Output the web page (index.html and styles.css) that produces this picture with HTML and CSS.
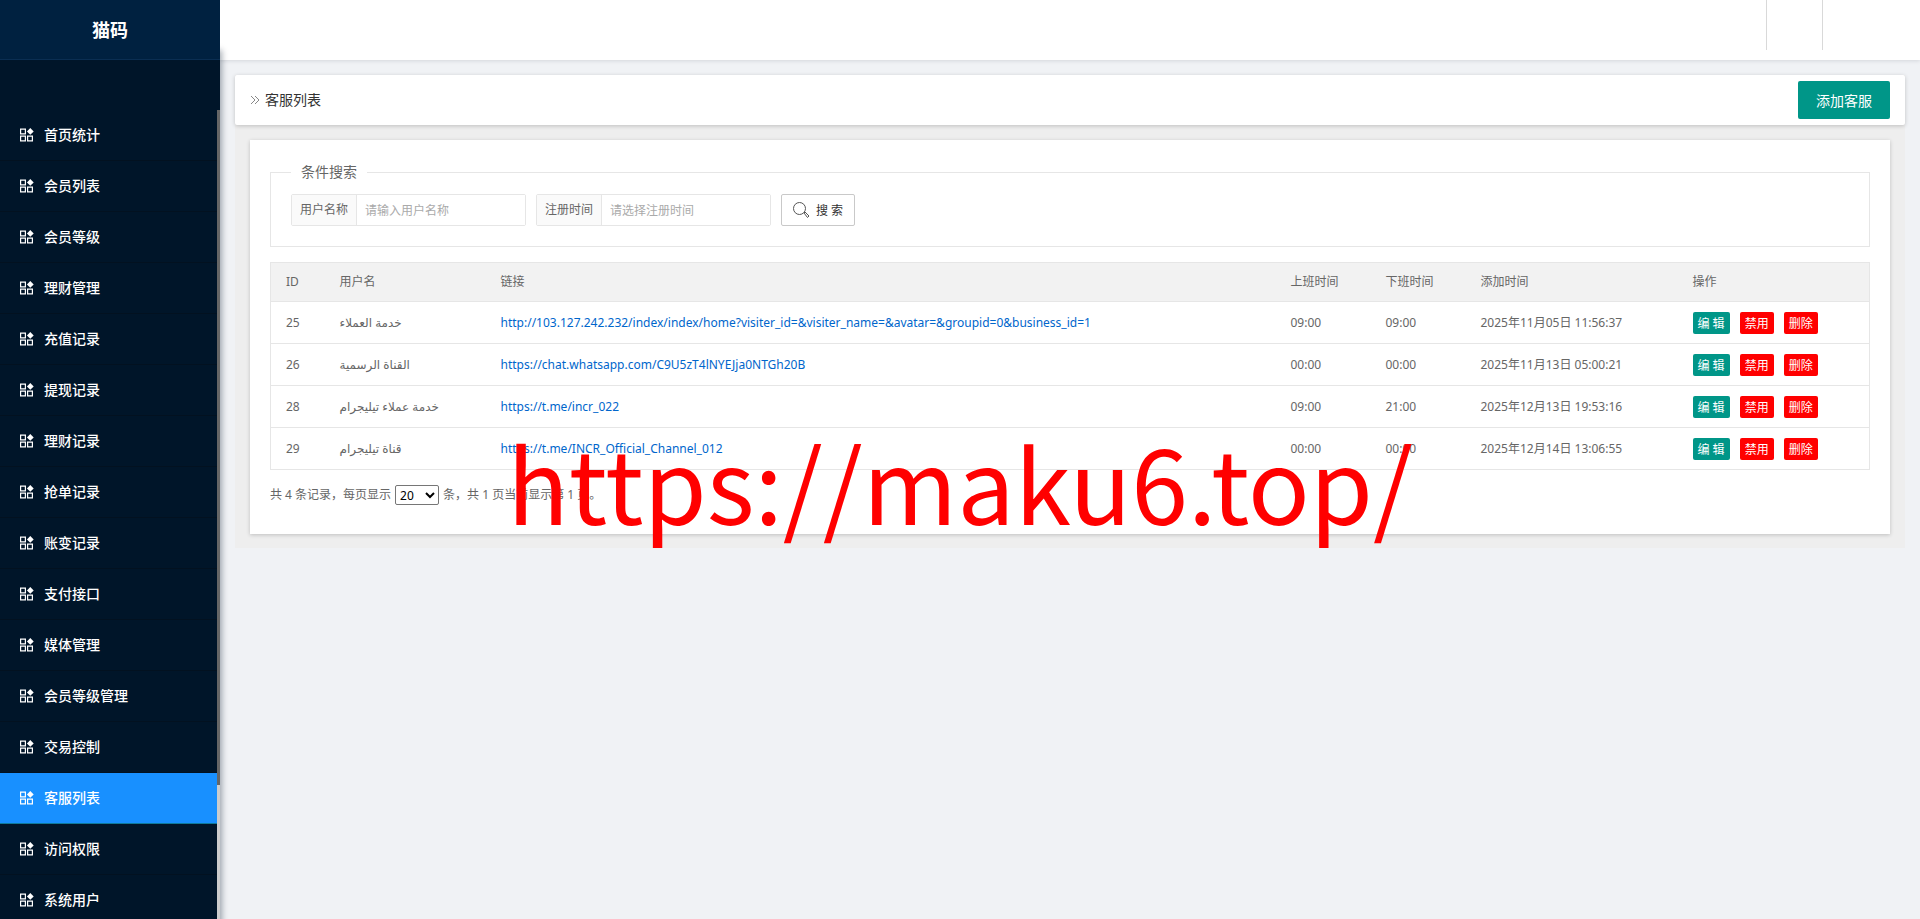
FILE: index.html
```
<!DOCTYPE html>
<html lang="zh-CN">
<head>
    <meta charset="UTF-8">
    <meta name="viewport" content="width=device-width, initial-scale=1.0">
    <title>客服列表</title>
    <link rel="stylesheet" href="styles.css">
</head>
<body>

    <svg class="defs" width="0" height="0">
        <symbol id="icon-app" viewBox="0 0 14 14">
            <path d="M.6 1.100h4.800v4.800H.6zM.6 8.100h4.800v4.800H.6zM7.600 8.100h4.800v4.800H7.600z" fill="none" stroke="currentColor" stroke-width="1.200"/>
            <path d="M10.300 0L13.700 3.400L10.300 6.800L6.900 3.400z" fill="currentColor"/>
        </symbol>
    </svg>

    <aside class="side">
        <div class="logo">猫码</div>
        <nav class="menu" id="menu"></nav>
    </aside>

    <div class="main">
        <header class="topbar">
            <div class="top-item"></div>
            <div class="top-item last"></div>
        </header>

        <div class="page">
            <div class="title-bar">
                <svg class="arrow" viewBox="0 0 10 10"><path d="M1 1l4 4l-4 4M5 1l4 4l-4 4" fill="none" stroke="#888"/></svg>
                <h1>客服列表</h1>
                <button type="button" class="btn btn-add">添加客服</button>
            </div>

            <div class="card">
                <form>
                    <fieldset>
                        <legend>条件搜索</legend>
                        <div class="search-row">
                            <div class="field">
                                <label for="username">用户名称</label>
                                <input type="text" id="username" placeholder="请输入用户名称">
                            </div>
                            <div class="field">
                                <label for="regtime">注册时间</label>
                                <input type="text" id="regtime" placeholder="请选择注册时间">
                            </div>
                            <button type="button" class="btn btn-search">
                                <svg viewBox="0 0 16 16"><circle cx="6.500" cy="6.500" r="6" fill="none" stroke="#555"/><path d="M11 11l1-1l4 4l-1.500 1.500z" fill="none" stroke="#555"/></svg>
                                搜 索
                            </button>
                        </div>
                    </fieldset>
                </form>

                <table>
                    <colgroup>
                        <col class="col-id">
                        <col class="col-name">
                        <col>
                        <col class="col-time">
                        <col class="col-time">
                        <col class="col-date">
                        <col class="col-op">
                    </colgroup>
                    <thead>
                        <tr>
                            <th>ID</th>
                            <th>用户名</th>
                            <th>链接</th>
                            <th>上班时间</th>
                            <th>下班时间</th>
                            <th>添加时间</th>
                            <th>操作</th>
                        </tr>
                    </thead>
                    <tbody id="rows"></tbody>
                </table>

                <div class="pager">
                    <label for="limit">共 4 条记录，每页显示</label>
                    <select id="limit">
                        <option>10</option>
                        <option selected>20</option>
                        <option>50</option>
                    </select>
                    <span>条，共 1 页当前显示第 1 页。</span>
                </div>
            </div>
        </div>
    </div>

    <div class="watermark">https://maku6.top/</div>

    <script>
        const menus = ['首页统计', '会员列表', '会员等级', '理财管理', '充值记录', '提现记录', '理财记录', '抢单记录',
            '账变记录', '支付接口', '媒体管理', '会员等级管理', '交易控制', '客服列表', '访问权限', '系统用户'];

        const rows = [
            [25, 'خدمة العملاء', 'http://103.127.242.232/index/index/home?visiter_id=&visiter_name=&avatar=&groupid=0&business_id=1', '09:00', '09:00', '2025年11月05日 11:56:37'],
            [26, 'القناة الرسمية', 'https://chat.whatsapp.com/C9U5zT4lNYEJja0NTGh20B', '00:00', '00:00', '2025年11月13日 05:00:21'],
            [28, 'خدمة عملاء تيليجرام', 'https://t.me/incr_022', '09:00', '21:00', '2025年12月13日 19:53:16'],
            [29, 'قناة تيليجرام', 'https://t.me/INCR_Official_Channel_012', '00:00', '00:00', '2025年12月14日 13:06:55']
        ];

        document.getElementById('menu').innerHTML = menus.map(name =>
            `<a href="#" class="${name === '客服列表' ? 'active' : ''}"><svg><use href="#icon-app"/></svg>${name}</a>`
        ).join('');

        document.getElementById('rows').innerHTML = rows.map(r => {
            const url = r[2].replace(/&/g, '&amp;');
            return `<tr>
                <td>${r[0]}</td>
                <td>${r[1]}</td>
                <td><a href="${url}">${url}</a></td>
                <td>${r[3]}</td>
                <td>${r[4]}</td>
                <td>${r[5]}</td>
                <td><div class="ops">
                    <button type="button" class="btn btn-xs">编 辑</button>
                    <button type="button" class="btn btn-xs btn-red">禁用</button>
                    <button type="button" class="btn btn-xs btn-red">删除</button>
                </div></td>
            </tr>`;
        }).join('');
    </script>
</body>
</html>
```
FILE: styles.css
```
* {
    box-sizing: border-box;
}

body {
    margin: 0;
    display: flex;
    height: 100vh;
    overflow: hidden;
    background: #f0f2f5;
    color: #666;
    font: 12px/20px "Noto Sans", "Noto Sans CJK SC", "DejaVu Sans", sans-serif;
}

button, input, select {
    font-family: inherit;
    font-size: 12px;
}

.defs {
    position: absolute;
}

/* sidebar */
.side {
    position: relative;
    z-index: 2;
    flex: none;
    width: 220px;
    display: flex;
    flex-direction: column;
    background: #001529;
    box-shadow: 2px 50px 6px rgba(0, 21, 41, 0.35);
}

.logo {
    flex: none;
    height: 60px;
    line-height: 60px;
    text-align: center;
    font-size: 18px;
    font-weight: bold;
    color: #fff;
    background: #002140;
    border-bottom: 1px solid #0a2e52;
}

.menu {
    position: relative;
    flex: 1;
    min-height: 0;
    margin-top: 50px;
    overflow: hidden;
}

/* thin scrollbar on the right edge of the menu */
.menu::after {
    content: "";
    position: absolute;
    top: 0;
    right: 0;
    bottom: 0;
    width: 3px;
    background: linear-gradient(#666 83.4%, #ccc 83.4%);
}

.menu a {
    display: flex;
    align-items: center;
    gap: 10px;
    height: 51px;
    padding-left: 20px;
    border-bottom: 1px solid #021120;
    color: #fff;
    font-size: 14px;
    font-weight: 500;
    text-decoration: none;
}

.menu a.active {
    background: #1890ff;
    border-bottom-color: #0f7a9a;
}

.menu svg {
    width: 14px;
    height: 14px;
}

/* right side */
.main {
    flex: 1;
    min-width: 0;
}

.topbar {
    display: flex;
    justify-content: flex-end;
    height: 60px;
    background: #fff;
    box-shadow: 0 1px 4px rgba(0, 21, 41, 0.12);
}

.top-item {
    width: 56px;
    height: 50px;
    border-left: 1px solid #d9d9d9;
}

.top-item.last {
    width: 98px;
}

.page {
    margin: 15px;
    padding-bottom: 14px;
    background: #eee;
}

.title-bar {
    display: flex;
    align-items: center;
    height: 50px;
    padding: 0 15px;
    background: #fff;
    border-radius: 2px;
    box-shadow: 0 1px 4px rgba(0, 0, 0, 0.2);
}

.arrow {
    width: 10px;
    height: 10px;
    margin-right: 5px;
}

h1 {
    flex: 1;
    margin: 0;
    font-size: 14px;
    font-weight: normal;
    color: #333;
}

.btn {
    border: 0;
    border-radius: 2px;
    background: #009688;
    color: #fff;
    white-space: nowrap;
    cursor: pointer;
}

.btn-add {
    height: 38px;
    padding: 0 18px;
    font-size: 14px;
}

.card {
    margin: 15px 15px 0;
    padding: 22px 20px 29px;
    background: #fff;
    box-shadow: 0 1px 4px rgba(0, 0, 0, 0.2);
}

fieldset {
    margin: 0 0 15px;
    padding: 12px 20px 20px;
    border: 1px solid #e6e6e6;
}

legend {
    padding: 0 10px;
    font-size: 14px;
}

.search-row {
    display: flex;
    gap: 10px;
}

.field {
    display: flex;
    width: 235px;
    height: 32px;
    border: 1px solid #e6e6e6;
    border-radius: 2px;
}

.field label {
    padding: 0 8px;
    line-height: 30px;
    background: #fafafa;
    border-right: 1px solid #e6e6e6;
    white-space: nowrap;
}

.field input {
    flex: 1;
    min-width: 0;
    padding: 0 8px;
    border: 0;
    background: #fff;
}

.field input::placeholder {
    color: #aaa;
}

.btn-search {
    display: flex;
    align-items: center;
    gap: 7px;
    height: 32px;
    padding: 0 11px;
    background: #fff;
    border: 1px solid #c9c9c9;
    color: #333;
}

.btn-search svg {
    width: 16px;
    height: 16px;
}

/* list */
table {
    width: 100%;
    table-layout: fixed;
    border-collapse: collapse;
    border: 1px solid #e6e6e6;
}

th, td {
    height: 42px;
    padding: 0 15px;
    border-bottom: 1px solid #e6e6e6;
    text-align: left;
    font-weight: normal;
    white-space: nowrap;
}

th {
    height: 39px;
    background: #f2f2f2;
}

td a {
    color: #06c;
    text-decoration: none;
}

.col-id {
    width: 54px;
}

.col-name {
    width: 161px;
}

.col-time {
    width: 95px;
}

.col-date {
    width: 212px;
}

.col-op {
    width: 192px;
}

.ops {
    display: flex;
    gap: 10px;
}

.btn-xs {
    height: 22px;
    padding: 0 5px;
}

.btn-red {
    background: #f00;
}

.pager {
    display: flex;
    align-items: center;
    gap: 4px;
    margin-top: 15px;
}

.pager select {
    width: 44px;
    height: 20px;
    padding: 0;
    border: 1px solid #767676;
    border-radius: 2px;
    background: #fff;
    color: #000;
}

.watermark {
    position: fixed;
    top: 430px;
    left: 0;
    right: 0;
    z-index: 10;
    text-align: center;
    font: 102px/1 "Noto Sans CJK SC", sans-serif;
    color: #f00;
    pointer-events: none;
}
```
